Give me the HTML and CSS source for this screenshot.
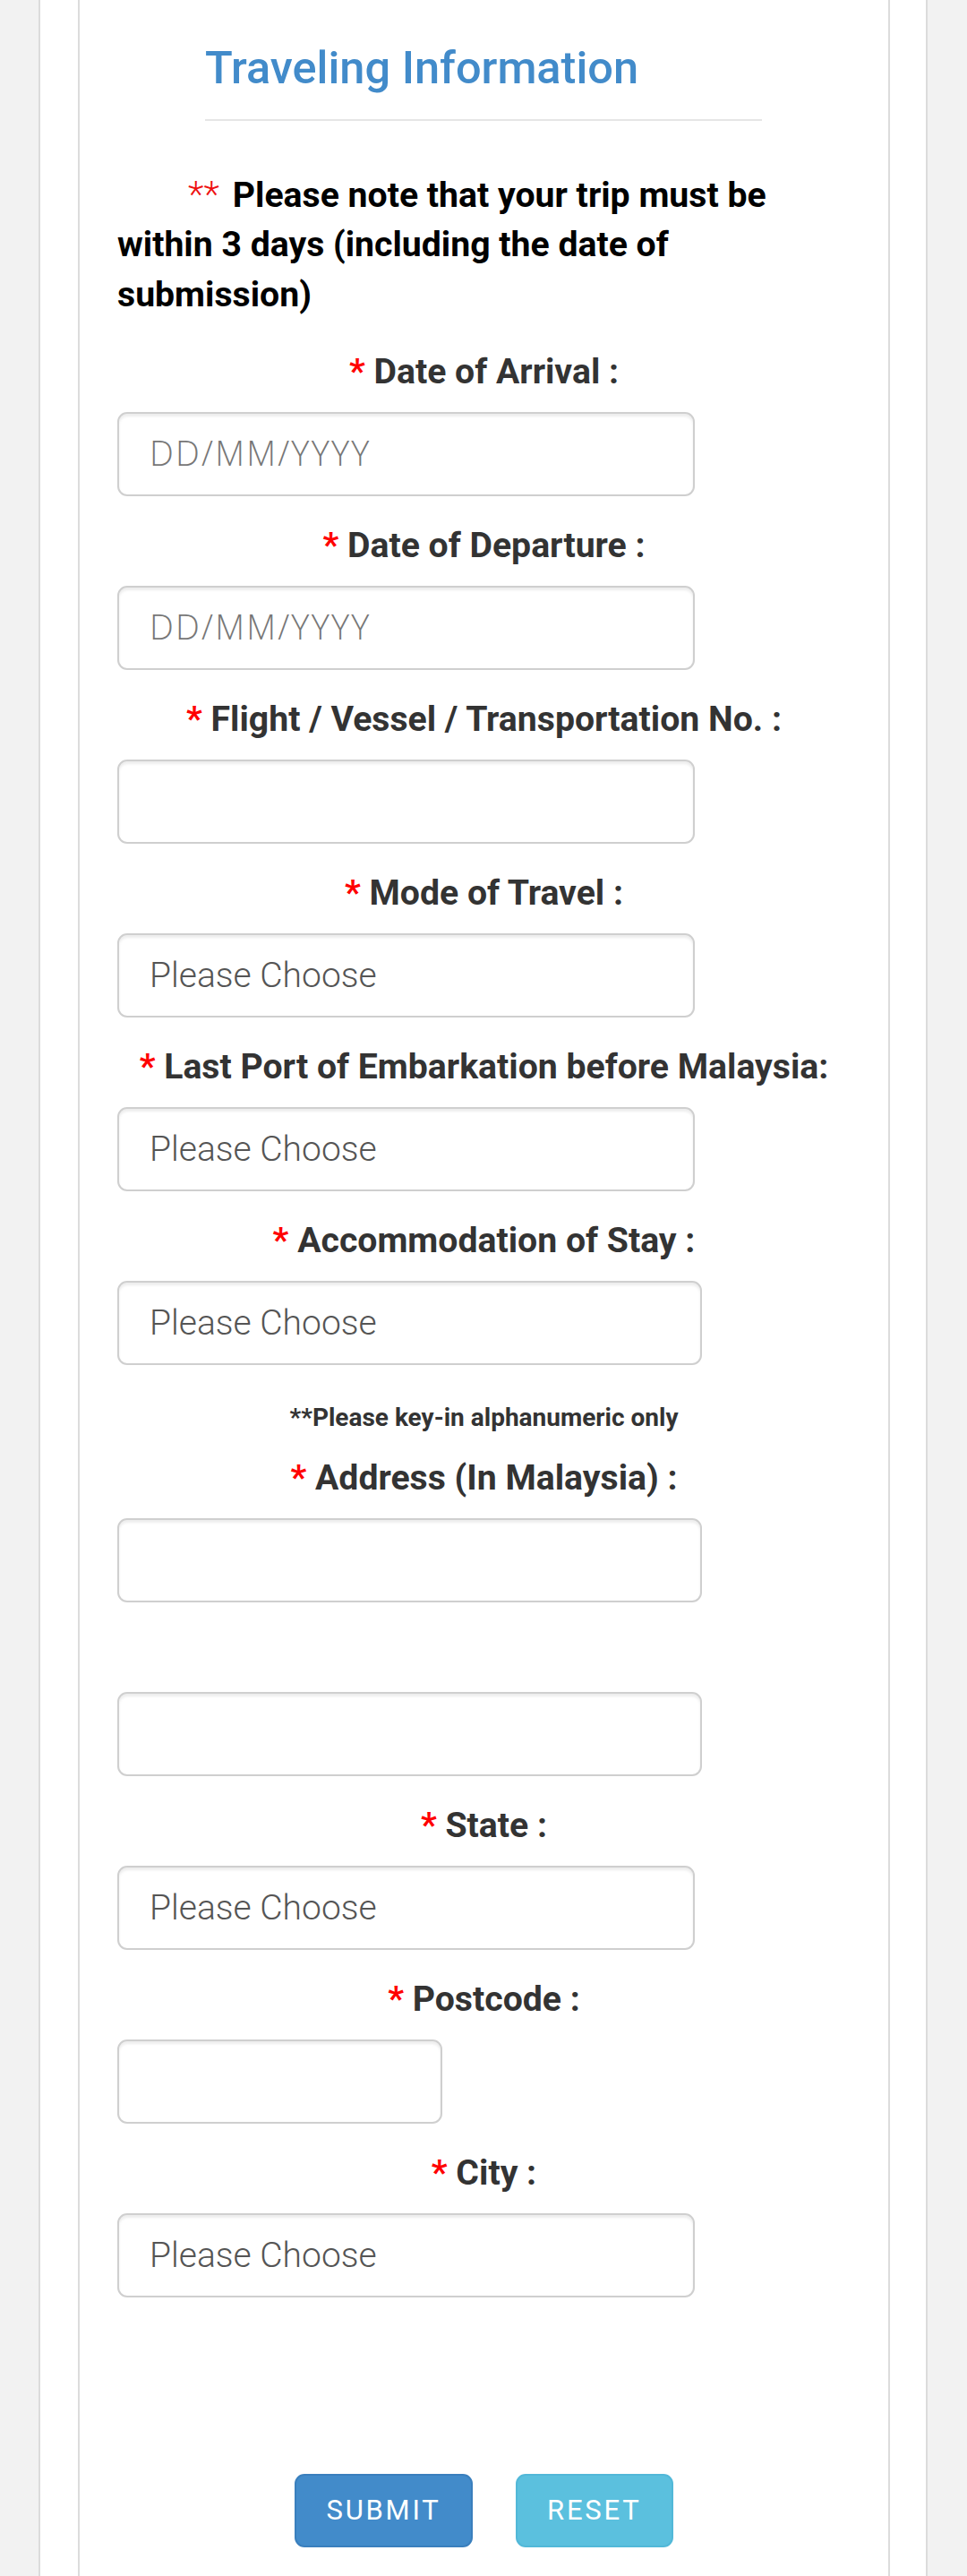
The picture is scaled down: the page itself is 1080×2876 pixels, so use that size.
FILE: index.html
```html
<!DOCTYPE html>
<html lang="en">
<head>
<meta charset="utf-8">
<title>Traveling Information</title>
<link rel="stylesheet" href="styles.css">
</head>
<body>
<div class="wrap">
  <div class="card">
    <h3 class="title">Traveling Information</h3>
    <div class="divider"></div>
    <p class="note"><span class="note-star">**</span>Please note that your trip must be within 3 days (including the date of submission)</p>

    <div class="group">
      <label class="label"><span class="req">*</span> Date of Arrival :</label>
      <input class="field date" type="text" placeholder="DD/MM/YYYY">
    </div>
    <div class="group">
      <label class="label"><span class="req">*</span> Date of Departure :</label>
      <input class="field date" type="text" placeholder="DD/MM/YYYY">
    </div>
    <div class="group">
      <label class="label"><span class="req">*</span> Flight / Vessel / Transportation No. :</label>
      <input class="field" type="text">
    </div>
    <div class="group">
      <label class="label"><span class="req">*</span> Mode of Travel :</label>
      <select class="field choose"><option>Please Choose</option></select>
    </div>
    <div class="group">
      <label class="label"><span class="req">*</span> Last Port of Embarkation before Malaysia:</label>
      <select class="field choose"><option>Please Choose</option></select>
    </div>
    <div class="group">
      <label class="label"><span class="req">*</span> Accommodation of Stay :</label>
      <select class="field choose wide"><option>Please Choose</option></select>
    </div>

    <p class="hint">**Please key-in alphanumeric only</p>

    <div class="group">
      <label class="label"><span class="req">*</span> Address (In Malaysia) :</label>
      <input class="field wide" type="text">
    </div>
    <div class="group">
      <label class="label empty"></label>
      <input class="field wide" type="text">
    </div>
    <div class="group">
      <label class="label"><span class="req">*</span> State :</label>
      <select class="field choose"><option>Please Choose</option></select>
    </div>
    <div class="group">
      <label class="label"><span class="req">*</span> Postcode :</label>
      <input class="field short" type="text">
    </div>
    <div class="group">
      <label class="label"><span class="req">*</span> City :</label>
      <select class="field choose"><option>Please Choose</option></select>
    </div>

    <div class="actions">
      <button class="btn btn-submit" type="button">SUBMIT</button>
      <button class="btn btn-reset" type="button">RESET</button>
    </div>
  </div>
</div>
</body>
</html>
```

FILE: styles.css
```css
* {
  box-sizing: border-box;
}

html, body {
  margin: 0;
  padding: 0;
  background: #f2f2f2;
  font-family: Roboto, "Liberation Sans", sans-serif;
}

.wrap {
  margin-left: 43px;
  width: 993px;
  min-height: 2876px;
  background: #fff;
  border-left: 2px solid #dcdcdc;
  border-right: 2px solid #dcdcdc;
  padding-left: 42px;
}

.card {
  width: 907px;
  min-height: 2876px;
  border-left: 2px solid #dcdcdc;
  border-right: 2px solid #dcdcdc;
  padding: 0 42px;
}

.title {
  margin: 0 0 0 98px;
  padding-top: 46.6px;
  font-size: 50.5px;
  line-height: 57.2px;
  font-weight: 500;
  color: #428bca;
}

.divider {
  margin: 29px 0 0 98px;
  width: 622px;
  height: 2px;
  background: #e6e6e6;
}

.note {
  margin: 55px 0 0 0;
  width: 818px;
  text-indent: 79px;
  font-size: 39.2px;
  line-height: 55.5px;
  font-weight: 700;
  color: #000;
}

.note-star {
  margin-right: 15px;
  color: #e11;
  font-size: 41px;
  font-weight: 300;
}

.group {
  margin-top: 0;
  margin-bottom: 28.3px;
}

.note + .group {
  margin-top: 31px;
}

.label {
  display: block;
  height: 55px;
  margin-bottom: 16.7px;
  text-align: center;
  font-size: 39.2px;
  line-height: 55px;
  font-weight: 700;
  color: #333;
}

.req {
  color: #f00;
}

.field {
  display: block;
  width: 645px;
  height: 94px;
  margin: 0;
  padding: 0 34px;
  border: 2.5px solid #cfcfcf;
  border-radius: 11px;
  background: #fff;
  box-shadow: inset 0 3px 3px rgba(0, 0, 0, 0.075);
  font-family: Roboto, "Liberation Sans", sans-serif;
  font-size: 39px;
  font-weight: 300;
  color: #555;
  outline: none;
}

.field.wide {
  width: 653px;
}

.field.short {
  width: 363px;
}

.date::placeholder {
  font-family: "Open Sans", Roboto, sans-serif;
  font-weight: 300;
  font-size: 38px;
  letter-spacing: 2.2px;
  color: #777;
}

.choose {
  appearance: none;
  -webkit-appearance: none;
  color: #555;
}

.hint {
  margin: 0 0 8.3px 0;
  text-align: center;
  font-size: 28px;
  line-height: 62.4px;
  font-weight: 700;
  color: #333;
}

.actions {
  display: flex;
  justify-content: center;
  gap: 48px;
  margin-top: 197.3px;
}

.btn {
  height: 82px;
  border: 2px solid transparent;
  border-radius: 11px;
  color: #fff;
  font-family: Roboto, "Liberation Sans", sans-serif;
  font-size: 31px;
  font-weight: 400;
  letter-spacing: 2.75px;
  padding: 0;
}

.btn-submit {
  width: 198.5px;
  background: #428bca;
  border-color: #3a7fbd;
}

.btn-reset {
  width: 176px;
  background: #5bc0de;
  border-color: #52b8d8;
}
```
